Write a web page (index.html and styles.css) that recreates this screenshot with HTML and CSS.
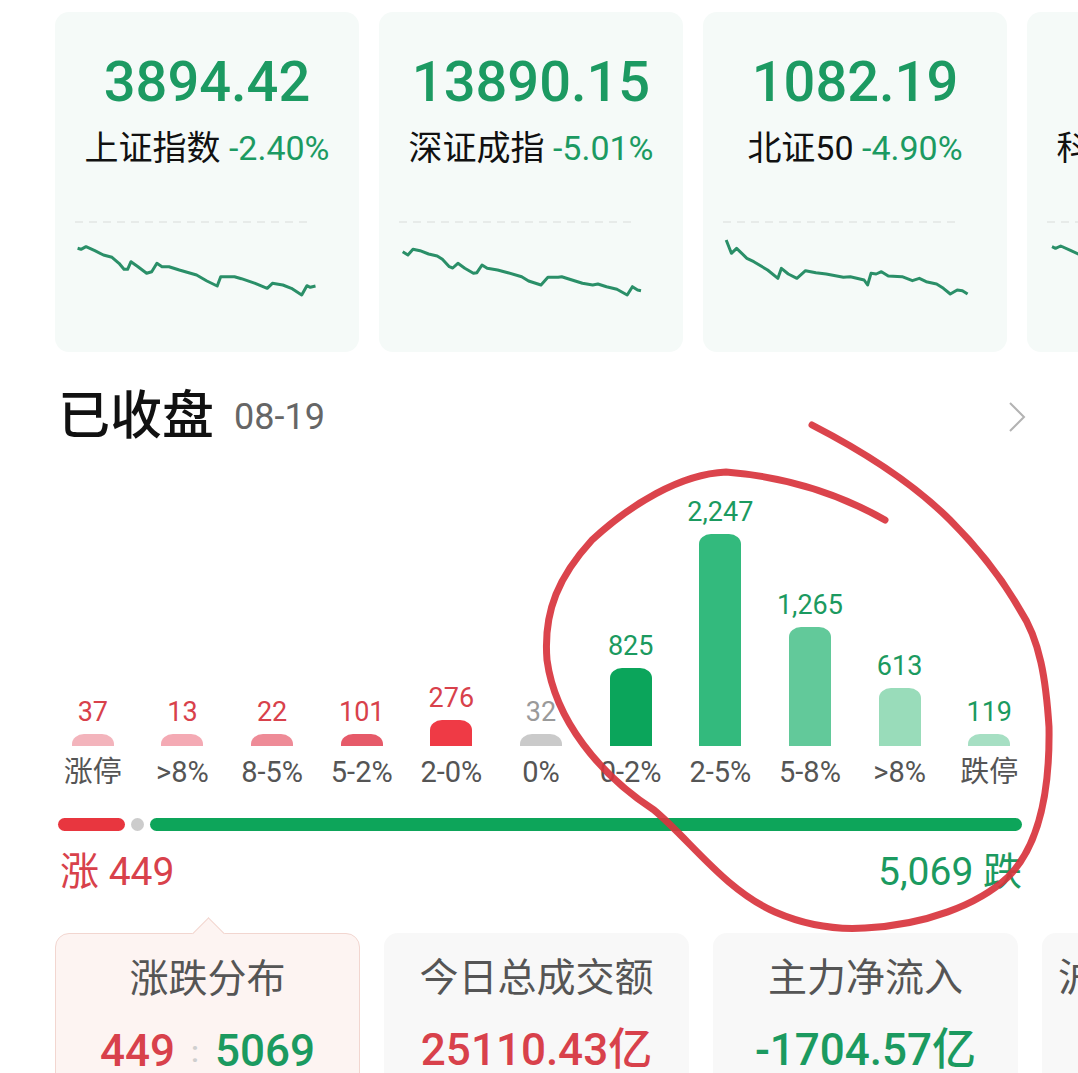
FILE: index.html
```
<!DOCTYPE html>
<html lang="zh-CN">
<head>
    <meta charset="UTF-8">
    <meta name="viewport" content="width=device-width, initial-scale=1.0">
    <title>已收盘</title>
    <link rel="stylesheet" href="styles.css">
</head>
<body>

<div class="page">
    <div class="index-row">
        <div class="index-card">
            <div class="index-value">3894.42</div>
            <div class="index-name">上证指数 <span class="pct">-2.40%</span></div>
            <svg class="spark" width="260" height="90" viewBox="0 0 260 90">
                <line class="spark-base" x1="0" y1="7" x2="236" y2="7"/>
                <polyline class="spark-line" points="2.6,33.3 6,34.3 11,31.7 19.8,35.7 28.4,40 37,42.3 44,48.3 49,54.3 52.6,54.3 56,46.7 63,51.7 71.6,58.3 76.7,56.7 81.9,48.3 87,51.7 94,51.7 104.3,55 121.6,60 131.9,66 142.2,71 145.7,61.7 159.5,61.7 166.4,63.7 180.2,68.3 192.2,73.3 197.4,68.3 207.8,70 216.4,73.3 226.7,80 231.9,70.7 235.3,72.3 240.5,71"/>
            </svg>
        </div>
        <div class="index-card">
            <div class="index-value">13890.15</div>
            <div class="index-name">深证成指 <span class="pct">-5.01%</span></div>
            <svg class="spark" width="260" height="90" viewBox="0 0 260 90">
                <line class="spark-base" x1="0" y1="7" x2="236" y2="7"/>
                <polyline class="spark-line" points="3.7,36.7 8.9,40 14,34.3 21,35.7 29.6,39 38.2,41 43.4,44.3 50.3,51.7 53.7,53 58.9,48.3 65.8,53.3 74.4,58.3 77.9,57.7 83,50 88.2,53.3 98.6,55 108.9,57.7 122.7,61.7 129.6,66 142,70 148.9,62.3 159.2,62.3 162.7,61.7 173,65 183.4,68.3 193.7,70 198.9,69 207.5,71.7 217.9,74.3 228.2,80 233.4,71.7 238.6,75 242,75.7"/>
            </svg>
        </div>
        <div class="index-card">
            <div class="index-value">1082.19</div>
            <div class="index-name">北证50 <span class="pct">-4.90%</span></div>
            <svg class="spark" width="260" height="90" viewBox="0 0 260 90">
                <line class="spark-base" x1="0" y1="7" x2="236" y2="7"/>
                <polyline class="spark-line" points="3.2,25 8.4,38.3 13.6,33.3 23.9,43.3 30.8,46.7 44.6,55 54.9,63.3 58.4,53.3 65.3,59 73.9,63.3 82.5,55.7 92.9,57.7 103.2,59 120.4,62.3 127.3,61.7 141.1,65 144.6,70 148,58.3 153.2,59 158.4,56.7 165.3,61 179.1,61.7 189.4,65.7 196.3,63.3 203.2,66.7 213.6,69 220.4,73.3 227.3,79 234.2,75 239.4,75.7 244.6,79"/>
            </svg>
        </div>
        <div class="index-card">
            <div class="index-value">986.15</div>
            <div class="index-name">科创综指 <span class="pct">-4.83%</span></div>
            <svg class="spark" width="260" height="90" viewBox="0 0 260 90">
                <line class="spark-base" x1="0" y1="7" x2="236" y2="7"/>
                <polyline class="spark-line" points="5,31.7 8.5,33.3 13.7,31 24,35.7 33.7,40 45,46 52,53 60,50 72,56 90,58 110,61 130,66 150,62 170,66 190,70 210,72 230,78 240,76"/>
            </svg>
        </div>
    </div>

    <div class="title-row">
        <div class="title">
            <span class="title-text">已收盘</span>
            <span class="title-date">08-19</span>
        </div>
        <svg class="chevron" width="18" height="32" viewBox="0 0 18 32">
            <polyline points="2,2 16,16 2,30"/>
        </svg>
    </div>

    <div class="dist-chart">
        <div class="dist-col">
            <div class="dist-num up">37</div>
            <div class="dist-bar up-limit" style="height:12px"></div>
            <div class="dist-label">涨停</div>
        </div>
        <div class="dist-col">
            <div class="dist-num up">13</div>
            <div class="dist-bar up-8" style="height:12px"></div>
            <div class="dist-label">&gt;8%</div>
        </div>
        <div class="dist-col">
            <div class="dist-num up">22</div>
            <div class="dist-bar up-5" style="height:12px"></div>
            <div class="dist-label">8-5%</div>
        </div>
        <div class="dist-col">
            <div class="dist-num up">101</div>
            <div class="dist-bar up-2" style="height:12px"></div>
            <div class="dist-label">5-2%</div>
        </div>
        <div class="dist-col">
            <div class="dist-num up">276</div>
            <div class="dist-bar up-0" style="height:26px"></div>
            <div class="dist-label">2-0%</div>
        </div>
        <div class="dist-col">
            <div class="dist-num flat">32</div>
            <div class="dist-bar flat-bar" style="height:12px"></div>
            <div class="dist-label">0%</div>
        </div>
        <div class="dist-col">
            <div class="dist-num down">825</div>
            <div class="dist-bar down-0" style="height:78px"></div>
            <div class="dist-label">0-2%</div>
        </div>
        <div class="dist-col">
            <div class="dist-num down">2,247</div>
            <div class="dist-bar down-2" style="height:212px"></div>
            <div class="dist-label">2-5%</div>
        </div>
        <div class="dist-col">
            <div class="dist-num down">1,265</div>
            <div class="dist-bar down-5" style="height:119px"></div>
            <div class="dist-label">5-8%</div>
        </div>
        <div class="dist-col">
            <div class="dist-num down">613</div>
            <div class="dist-bar down-8" style="height:58px"></div>
            <div class="dist-label">&gt;8%</div>
        </div>
        <div class="dist-col">
            <div class="dist-num down">119</div>
            <div class="dist-bar down-limit" style="height:12px"></div>
            <div class="dist-label">跌停</div>
        </div>
    </div>

    <div class="ratio-bar">
        <div class="ratio-up"></div>
        <div class="ratio-flat"></div>
        <div class="ratio-down"></div>
    </div>

    <div class="ratio-text">
        <span class="up">涨 449</span>
        <span class="down">5,069 跌</span>
    </div>

    <div class="stat-row">
        <div class="stat-card active">
            <div class="stat-title">涨跌分布</div>
            <div class="stat-value"><span class="up">449</span><span class="colon">:</span><span class="down">5069</span></div>
        </div>
        <div class="stat-card">
            <div class="stat-title">今日总成交额</div>
            <div class="stat-value up">25110.43亿</div>
        </div>
        <div class="stat-card">
            <div class="stat-title">主力净流入</div>
            <div class="stat-value down">-1704.57亿</div>
        </div>
        <div class="stat-card">
            <div class="stat-title">沪深两市成交额</div>
            <div class="stat-value up">3.2万亿</div>
        </div>
    </div>

    <!-- hand drawn mark over the chart -->
    <svg class="annotation" width="1078" height="1073" viewBox="0 0 1078 1073">
        <path d="M885,520 C850,500 800,478 726,472 C680,474 630,505 592,540 C560,575 543,610 547,660 C555,720 600,775 654,810 C690,840 725,890 775,912 C805,925 835,930 865,928 C925,925 978,905 1008,877 C1040,845 1050,790 1049,727 C1046,680 1040,640 1020,610 C1000,575 975,545 950,520 C920,490 880,460 812,425"/>
    </svg>
</div>

</body>
</html>
```

FILE: styles.css
```
body {
    margin: 0;
    background-color: #ffffff;
    font-family: Roboto, "Noto Sans CJK SC", sans-serif;
    color: #111111;
}
.page {
    position: relative;
    width: 1078px;
    height: 1073px;
    overflow: hidden;
}
.up {
    color: #d8414b;
}
.down {
    color: #1b9a60;
}
.flat {
    color: #9a9a9a;
}

/* index cards */
.index-row {
    display: flex;
    gap: 20px;
    padding: 12px 0 0 55px;
}
.index-card {
    flex-shrink: 0;
    width: 304px;
    height: 340px;
    background-color: #f5faf8;
    border-radius: 14px;
    text-align: center;
}
.index-value {
    margin-top: 40px;
    font-size: 56px;
    line-height: 60px;
    font-weight: 500;
    color: #1c9a62;
}
.index-name {
    margin-top: 14px;
    font-size: 34px;
    line-height: 44px;
    white-space: nowrap;
    color: #111111;
}
.pct {
    color: #1c9a62;
}
.spark {
    display: block;
    margin: 45px 0 0 20px;
}
.spark-base {
    stroke: #e2e6e4;
    stroke-width: 1.5;
    stroke-dasharray: 8 6;
}
.spark-line {
    fill: none;
    stroke: #2a8f68;
    stroke-width: 3;
    stroke-linejoin: round;
}

/* title */
.title-row {
    display: flex;
    align-items: center;
    justify-content: space-between;
    margin-top: 35px;
    padding: 0 52px 0 58px;
    height: 60px;
}
.title {
    display: flex;
    align-items: center;
    gap: 20px;
}
.title-text {
    font-size: 52px;
    line-height: 60px;
    font-weight: 500;
    color: #111111;
}
.title-date {
    font-size: 36px;
    color: #666666;
}
.chevron polyline {
    fill: none;
    stroke: #b3b3b3;
    stroke-width: 2;
}

/* distribution chart */
.dist-chart {
    display: flex;
    align-items: flex-end;
    width: 986px;
    height: 290px;
    margin: 50px 0 0 48px;
}
.dist-col {
    flex: 1;
    display: flex;
    flex-direction: column;
    align-items: center;
}
.dist-num {
    font-size: 27px;
    line-height: 30px;
    margin-bottom: 7px;
}
.dist-bar {
    width: 42px;
    border-radius: 12px 12px 0 0 / 10px 10px 0 0;
}
.dist-label {
    margin-top: 11px;
    font-size: 29px;
    line-height: 30px;
    color: #555555;
    white-space: nowrap;
}
.up-limit { background-color: #f3b4bc; }
.up-8 { background-color: #f4aab4; }
.up-5 { background-color: #ee8b97; }
.up-2 { background-color: #e65a69; }
.up-0 { background-color: #ef3a45; }
.flat-bar { background-color: #cacaca; }
.down-0 { background-color: #0ba55b; }
.down-2 { background-color: #33ba7d; }
.down-5 { background-color: #62c99a; }
.down-8 { background-color: #99dcba; }
.down-limit { background-color: #a6dfc3; }

/* up / down ratio */
.ratio-bar {
    display: flex;
    align-items: center;
    gap: 6px;
    margin: 31px 56px 0 58px;
    height: 13px;
}
.ratio-up {
    width: 67px;
    height: 13px;
    border-radius: 7px;
    background-color: #e8363f;
}
.ratio-flat {
    width: 13px;
    height: 13px;
    border-radius: 50%;
    background-color: #cccccc;
}
.ratio-down {
    flex: 1;
    height: 13px;
    border-radius: 7px;
    background-color: #0da55a;
}
.ratio-text {
    display: flex;
    justify-content: space-between;
    margin: 18px 56px 0 60px;
    font-size: 39px;
    line-height: 46px;
}

/* bottom stat cards */
.stat-row {
    display: flex;
    gap: 24px;
    margin-top: 38px;
    padding-left: 55px;
}
.stat-card {
    position: relative;
    flex-shrink: 0;
    box-sizing: border-box;
    width: 305px;
    height: 160px;
    padding-top: 22px;
    background-color: #f8f8f8;
    border-radius: 14px;
    text-align: center;
}
.stat-card.active {
    background-color: #fdf4f2;
    border: 1.5px solid #f2d6d0;
}
.stat-card.active::before {
    content: "";
    position: absolute;
    top: -12px;
    left: 50%;
    width: 22px;
    height: 22px;
    margin-left: -11px;
    background-color: #fdf4f2;
    border-top: 1.5px solid #f2d6d0;
    border-left: 1.5px solid #f2d6d0;
    transform: rotate(45deg);
}
.stat-title {
    font-size: 39px;
    line-height: 46px;
    color: #555555;
    white-space: nowrap;
}
.stat-value {
    margin-top: 22px;
    font-size: 44px;
    line-height: 54px;
    font-weight: 500;
    white-space: nowrap;
}
.colon {
    margin: 0 16px;
    color: #cfcfcf;
    font-size: 30px;
    vertical-align: 4px;
}

.annotation {
    position: absolute;
    top: 0;
    left: 0;
    pointer-events: none;
}
.annotation path {
    fill: none;
    stroke: #d8343d;
    stroke-width: 7;
    stroke-linecap: round;
    stroke-linejoin: round;
    opacity: 0.92;
}
```
